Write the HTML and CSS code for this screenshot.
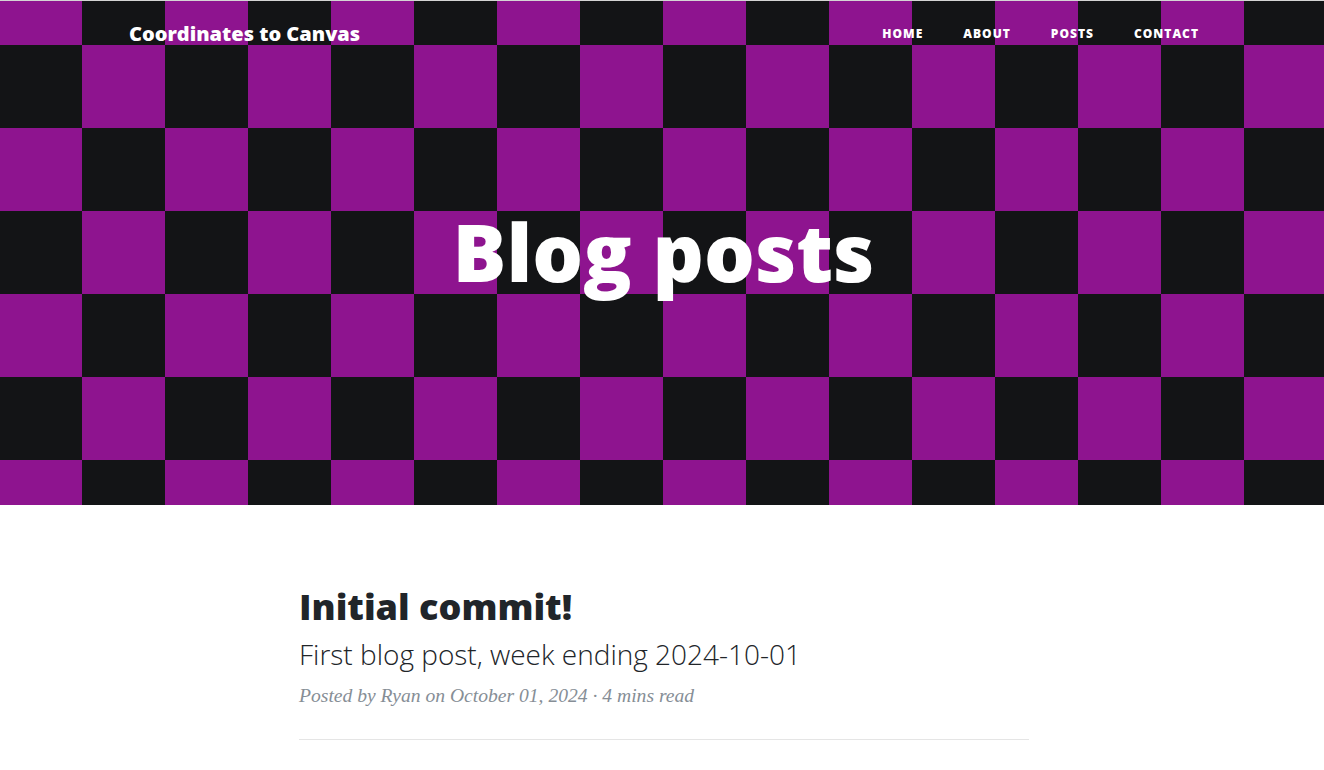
FILE: index.html
```html
<!DOCTYPE html>
<html lang="en">
<head>
<meta charset="utf-8">
<title>Blog posts - Coordinates to Canvas</title>
<link rel="stylesheet" href="styles.css">
</head>
<body>
<div class="topline"></div>
<header class="masthead">
  <nav class="navbar">
    <a class="brand" href="#">Coordinates to Canvas</a>
    <ul class="nav-links">
      <li><a href="#">Home</a></li>
      <li><a href="#">About</a></li>
      <li><a href="#">Posts</a></li>
      <li><a href="#">Contact</a></li>
    </ul>
  </nav>
  <div class="page-heading">
    <h1>Blog posts</h1>
  </div>
</header>
<main class="content">
  <article class="post-preview">
    <a href="#" class="post-link">
      <h2 class="post-title">Initial commit!</h2>
      <h3 class="post-subtitle">First blog post, week ending 2024-10-01</h3>
    </a>
    <p class="post-meta">Posted by Ryan on October 01, 2024 &middot; 4 mins read</p>
  </article>
  <hr class="divider">
</main>
</body>
</html>
```
FILE: styles.css
```css
html, body {
  margin: 0;
  padding: 0;
  background: #ffffff;
}
body {
  font-family: "Open Sans", "Liberation Sans", sans-serif;
  color: #212529;
}
.topline {
  height: 1px;
  background: #d4d4d4;
}
.masthead {
  height: 504px;
  background-color: #131416;
  background-image: repeating-conic-gradient(#131416 0 25%, #8e148f 0 50%);
  background-size: 166px 166px;
  background-position: -1px -39px;
  display: flex;
  flex-direction: column;
}
.navbar {
  display: flex;
  justify-content: space-between;
  align-items: center;
  height: 65px;
  padding: 0 105px 0 129px;
  box-sizing: border-box;
}
.brand {
  color: #fff;
  text-decoration: none;
  font-weight: 800;
  font-size: 20px;
}
.nav-links {
  display: flex;
  list-style: none;
  margin: 0;
  padding: 0;
}
.nav-links a {
  display: block;
  padding: 0 20px;
  color: #fff;
  text-decoration: none;
  text-transform: uppercase;
  font-size: 12px;
  font-weight: 800;
  letter-spacing: 1px;
}
.page-heading {
  text-align: center;
  padding-top: 137px;
  padding-left: 3px;
}
.page-heading h1 {
  margin: 0;
  color: #fff;
  font-size: 80px;
  font-weight: 800;
  line-height: 1.2;
}
.content {
  width: 730px;
  margin: 0 auto;
  padding-top: 80px;
  transform: translateX(2px);
}
.post-link {
  color: #212529;
  text-decoration: none;
}
.post-title {
  margin: 0;
  font-size: 36px;
  font-weight: 800;
  line-height: 1.2;
}
.post-subtitle {
  margin: 10px 0 13px;
  font-size: 28px;
  font-weight: 300;
  line-height: 1.2;
}
.post-meta {
  margin: 0;
  font-family: "Liberation Serif", serif;
  font-style: italic;
  font-size: 19.6px;
  color: #868e96;
}
.divider {
  margin: 32px 0 0;
  border: 0;
  border-top: 1px solid #e5e5e5;
}
```
